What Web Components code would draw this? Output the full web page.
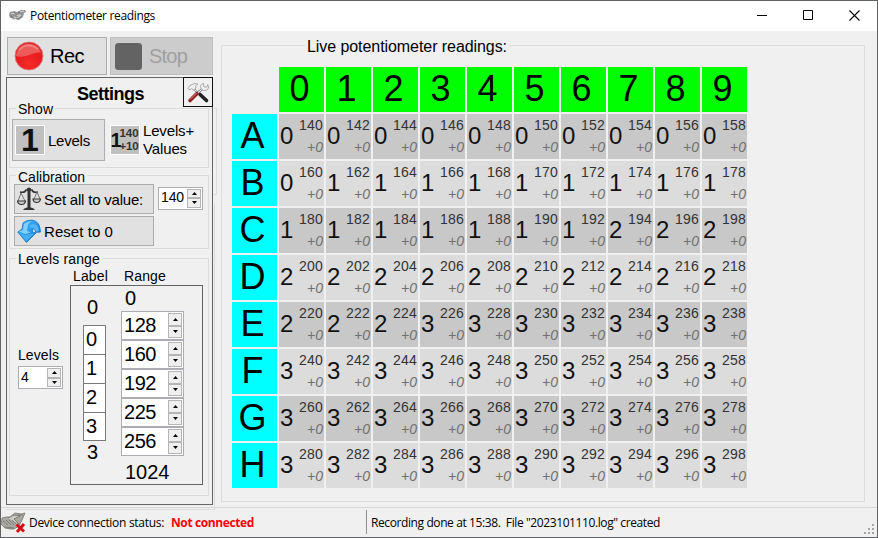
<!DOCTYPE html>
<html lang="en"><head><meta charset="utf-8"><title>Potentiometer readings</title>
<style>html,body{margin:0;height:100%;overflow:hidden}body{font-family:"Liberation Sans",sans-serif;color:#000}</style></head>
<body><app-window></app-window>
<script>
const define = (name, html, setup) => customElements.define(name, class extends HTMLElement {
  connectedCallback() {
    if (this.shadowRoot) return;
    this.attachShadow({mode: 'open'}).innerHTML = typeof html === 'function' ? html(this) : html;
    if (setup) setup(this);
  }
});

/* single line of text, tracked to the width given in "w" */
define('ui-text', '<style>:host{display:block;white-space:pre;width:max-content;flex:none}</style><slot></slot>', el => {
  const w = +el.getAttribute('w');
  if (!w) return;
  const n = el.textContent.length;
  el.style.letterSpacing = (w - el.getBoundingClientRect().width) / n + 'px';
});

const icons = {
  chip: `<svg width="18" height="13" viewBox="0 0 18 13"><path d="M1 3l4-1 3 1 4-2 4 0 1 2-2 1-1 4-4 3-4-1-5-1-1-3z" fill="#959595"/><path d="M2 5l4-1 3 3 4-3M4 8l4 1 4-3M3 10l3 1M11 3l4-1" stroke="#d8d8d8" fill="none"/><path d="M5 3l3 3M9 3l4 2M7 9l3 1M2 7l3 2" stroke="#666" stroke-width=".8" fill="none"/></svg>`,
  rec: `<svg width="30" height="30" viewBox="0 0 30 30"><defs><radialGradient id="g" cx=".5" cy=".8" r=".75"><stop offset="0" stop-color="#f52c28"/><stop offset=".6" stop-color="#e81c20"/><stop offset="1" stop-color="#d9292a"/></radialGradient></defs><circle cx="15" cy="15" r="14" fill="url(#g)" stroke="#e08080" stroke-width=".8"/><path d="M2 15A13 13 0 0 1 27 11Q20 12 15 14Q8 17 2 15z" fill="#ef6a68" opacity=".8"/><path d="M5 9Q14 0 24 8" stroke="#f49a94" stroke-width="2" fill="none" opacity=".6"/></svg>`,
  stop: `<svg width="27" height="27"><rect width="27" height="27" rx="3.5" fill="#636363"/></svg>`,
  tools: `<svg width="24" height="24" viewBox="0 0 24 24" fill="none"><path d="M7.500 8.500l5.500 5.500" stroke="#999" stroke-width="2.200"/><path d="M7.500 8.500l5.500 5.500" stroke="#f0f0f0" stroke-width=".9"/><path d="M14 14.500l6.500 6" stroke="#222" stroke-width="3.600" stroke-linecap="round"/><path d="M2 8.500L4 5.500q4-3 8-1.500l-2.500 2 .5 2-2.500 2-2-1.500-1.500 1.500z" fill="#f0f0f0" stroke="#999" stroke-width=".8"/><path d="M4 20.500l7-7" stroke="#8e2225" stroke-width="3.600" stroke-linecap="round"/><path d="M4 19.500l6.500-6.500" stroke="#d98b87" stroke-width="1"/><path d="M12 12.500l5-4" stroke="#888" stroke-width="2.500"/><path d="M12 12.500l5-4" stroke="#f0f0f0"/><path d="M15 8.500q-1.500-4 2.500-5l.5 3.500 3 0 .7-2.500q2.500 4-1.700 6-3 .7-5-2z" fill="#f0f0f0" stroke="#999" stroke-width=".8"/></svg>`,
  scale: `<svg width="24" height="24" viewBox="0 0 24 24" fill="none" stroke="#333" stroke-width="1.2"><path d="M3 5q5 1 6-2h6q1 3 6 2" stroke-width="1.7"/><path d="M4 6L1 14M4 6l4 8M20 5l-3 7M20 5l3 7" stroke="#666" stroke-width=".9"/><path d="M.5 14H8.500Q8 17.500 4.500 17.500T.5 14zM16 12h7.500q-.5 3.500-3.800 3.500T16 12z" fill="#ccc"/><path d="M12 1v20" stroke-width="3"/><circle cx="12" cy="2.500" r="2" fill="#333" stroke="none"/><path d="M6 23q1-2 4-2.500h4q3 .5 4 2.500z" fill="#333" stroke="none"/></svg>`,
  reset: `<svg width="24" height="24" viewBox="0 0 24 24"><defs><linearGradient id="b" x2="1" y2="1"><stop stop-color="#45b4f8"/><stop offset=".5" stop-color="#2c9bed"/><stop offset="1" stop-color="#0c61bd"/></linearGradient></defs><path d="M5 10L6 4Q9 1 15 1q8 1 8.500 12l-5 .5q0-4-3-3.500l0 3 3.500 1-9.500 9.500L.7 13z" fill="url(#b)" stroke="#1979c9" stroke-width=".8"/><path d="M2 12.500L6 11l1-6q4-3 8-3-4 2-4.500 6l-.5 4 4 1.500-6 1.500z" fill="#7fd0fb"/><path d="M13 6q5-3 8 2l1 4-3 .5q-1-4-6-4z" fill="#56b4f3"/><path d="M2.500 14l5.500 2 9-1.500-7.500 8z" fill="#45aef4"/></svg>`,
  hands: `<svg width="25" height="21" viewBox="0 0 25 21"><path d="M1 6l4-1 4 0 5-4 6 1 4-1-3 7-3 6-5 3-4 0-5-1-4-4z" fill="#a9a9a2" stroke="#75756f" stroke-width=".8"/><path d="M7 6l6-3 6 1-6 3 5 5" fill="#ccccc4" stroke="#66665f" stroke-width=".7"/><path d="M2 9l5 4M5 8l5 5M8 8l5 5M11 8l4 4M17 3l5 0M4 15l9 1" stroke="#70706a" fill="none" stroke-width=".8"/><path d="M15.500 12.500l7.500 7M23 12l-7 8" stroke="#d70b16" stroke-width="3"/></svg>`
};
define('ui-icon', el => `<style>:host{display:block;flex:none}svg{display:block}</style>${icons[el.getAttribute('name')]}`);

define('ui-button', `<style>:host{display:flex;align-items:center;box-sizing:border-box;flex:none;background:#e1e1e1;border:1px solid #adadad}
:host([disabled]){background:#ccc;border-color:#bfbfbf;color:#a0a0a0}:host([flat]){background:none;border-color:transparent}</style><slot></slot>`);

define('ui-group', el => `<style>:host{display:block;box-sizing:border-box;border:1px solid #dcdcdc;flex:none}
.t{display:flex;height:0;margin-left:${el.getAttribute('inset') || 6}px}
ui-text{background:#f0f0f0;height:${el.getAttribute('th') || 16}px;line-height:19px;padding:0 2px;margin-top:${el.getAttribute('lift') || -9}px;font-size:${el.getAttribute('size') || 14}px}</style>
<div class="t"><ui-text w="${+el.getAttribute('tw') + 4}">${el.getAttribute('label')}</ui-text></div><slot></slot>`);

define('ui-spin', el => `<style>:host{display:flex;box-sizing:border-box;background:#fff;border:1px solid #abadb3;flex:none;justify-content:space-between;padding:1px}
.v{align-self:center;padding-left:1px;margin-top:-2px}.b{display:flex;flex-direction:column;width:14px;flex:none}
.b i{flex:1;box-sizing:border-box;border:1px solid #b5b5b5;background:#efefef;display:grid;place-items:center}svg{display:block}</style>
<ui-text class="v" w="${el.getAttribute('tw')}">${el.getAttribute('value')}</ui-text><div class="b"><i><svg width="5" height="3"><path d="M0 3L2.500 0L5 3z"/></svg></i><i><svg width="5" height="3"><path d="M0 0L2.500 3L5 0z"/></svg></i></div>`);

define('level-tile', el => `<style>:host{display:flex;box-sizing:border-box;width:30px;height:30px;background:#c0c0c0;border:1px solid #fff;color:#111;font-weight:bold;align-items:center;justify-content:center;flex:none}
.big{font-size:32px;line-height:28px}.one{font-size:20px;line-height:26px;width:8px;flex:none}.one ui-text{margin-left:-1px}.p{display:flex;flex-direction:column;font-size:11.5px;line-height:13px;color:#333;align-items:flex-end}</style>
${el.hasAttribute('values') ? '<div class="one"><ui-text w="9">1</ui-text></div><div class="p"><ui-text w="19">140</ui-text><ui-text w="19">+10</ui-text></div>' : '<div class="big">1</div>'}`);

define('pot-cell', el => `<style>:host{display:flex;justify-content:space-between;box-sizing:border-box;width:45px;height:45px;background:var(--cell)}
.l{font-size:24px;line-height:43px;margin-left:1px;color:#111}.r{display:flex;flex-direction:column;align-items:flex-end;padding:3px 1px 0 0}
.n{font-size:14px;line-height:17px;color:#333}.d{font-size:14px;line-height:17px;font-style:italic;color:#707070;margin-top:5px}</style>
<ui-text class="l" w="13">${el.getAttribute('level')}</ui-text><div class="r"><ui-text class="n" w="24">${el.getAttribute('value')}</ui-text><ui-text class="d" w="16">+0</ui-text></div>`);

define('pot-head', `<style>:host{display:flex;align-items:center;justify-content:center;width:45px;height:45px;background:#0f0;font-size:36px;line-height:44px;box-sizing:border-box;padding:0 4px 1px 0}:host([row]){background:#0ff}</style><slot></slot>`);

define('pot-grid', () => {
  const levels = ['0000000000','0111111111','1111111222','2222222222','2223333333','3333333333','3333333333','3333333333'];
  let h = '<span></span>' + [...'0123456789'].map(c => `<pot-head>${c}</pot-head>`).join('');
  levels.forEach((row, r) => {
    h += `<pot-head row>${'ABCDEFGH'[r]}</pot-head>`;
    [...row].forEach((l, c) => h += `<pot-cell style="--cell:${r % 2 ? '#dcdcdc' : '#c8c8c8'}" level="${l}" value="${140 + r * 20 + c * 2}"></pot-cell>`);
  });
  return `<style>:host{display:grid;grid-template-columns:repeat(11,45px);grid-auto-rows:45px;gap:2px}</style>${h}`;
});

define('levels-table', `<style>:host{display:flex;box-sizing:border-box;width:133px;height:200px;border:1px solid #646464;font-size:20px;line-height:22px}
.a{width:23px;margin-left:12px;padding-top:10px}.a>ui-text{margin-left:4px}.box{border:1px solid #7a7a7a;margin-top:7px;background:#fff}
.box div{height:28px;line-height:27px;padding-left:2px;border-bottom:1px solid #7a7a7a}.box div:last-child{border:0;height:27px}.box+ui-text{margin-top:0}
.b{margin-left:15px;padding-top:1px}.b>ui-text{margin-left:4px}.b ui-spin{width:63px;height:29px}.b ui-spin:first-of-type{margin-top:2px}.b ui-text:last-child{margin-top:5px}</style>
<div class="a"><ui-text>0</ui-text><div class="box"><div>0</div><div>1</div><div>2</div><div>3</div></div><ui-text>3</ui-text></div>
<div class="b"><ui-text>0</ui-text><ui-spin value="128" tw="33"></ui-spin><ui-spin value="160" tw="33"></ui-spin><ui-spin value="192" tw="33"></ui-spin><ui-spin value="225" tw="33"></ui-spin><ui-spin value="256" tw="33"></ui-spin><ui-text>1024</ui-text></div>`);

define('settings-panel', `<style>:host{display:block;box-sizing:border-box;width:207px;height:428px;border:1px solid #646464;position:relative;background:#f0f0f0;font-size:15px}
.head{display:flex;justify-content:flex-end;height:30px}.head ui-text{font-weight:bold;font-size:18px;line-height:33px;margin-right:68px}
.tool{position:absolute;right:-1px;top:-1px;box-sizing:border-box;width:30px;height:30px;border:1px solid #111;display:grid;place-items:center;background:#f0f0f0}
ui-group{width:200px;margin-left:2px}.show{height:60px}.cal{height:74px;margin-top:7px}.lev{height:238px;margin-top:9px}
.row{display:flex;align-items:center}.show .row{padding:10px 0 0 2px}.show ui-button{height:42px;width:93px;padding-left:2px;gap:3px}
.show .two{width:100px;margin-left:2px;gap:4px}.two div{line-height:18px;margin-left:-1px}
.cal{line-height:20px}.cal ui-button{width:140px;height:30px;padding-left:2px;gap:3px}.cal .row{padding:8px 0 0 4px}.cal .row+ui-button{margin:2px 0 0 4px}.cal ui-button ui-text{padding-top:2px}.cal ui-spin{width:45px;height:23px;margin-left:4px;margin-top:-2px;font-size:14px}
.lv{display:flex}.side{width:52px;padding:88px 0 0 8px;font-size:14px}.side ui-spin{width:45px;height:23px;margin-top:3px}
.labs{display:flex;font-size:14px;line-height:16px;padding:9px 0 1px 3px;gap:16px}</style>
<div class="head"><ui-text w="67">Settings</ui-text></div><div class="tool"><ui-icon name="tools"></ui-icon></div>
<ui-group class="show" label="Show" tw="35"><div class="row"><ui-button><level-tile></level-tile><ui-text w="42">Levels</ui-text></ui-button><ui-button flat class="two"><level-tile values></level-tile><div><ui-text w="51">Levels+</ui-text><ui-text w="44">Values</ui-text></div></ui-button></div></ui-group>
<ui-group class="cal" label="Calibration" tw="67" lift="-8"><div class="row"><ui-button><ui-icon name="scale"></ui-icon><ui-text w="99">Set all to value:</ui-text></ui-button><ui-spin value="140" tw="24"></ui-spin></div><ui-button><ui-icon name="reset"></ui-icon><ui-text w="69">Reset to 0</ui-text></ui-button></ui-group>
<ui-group class="lev" label="Levels range" tw="82"><div class="lv"><div class="side"><ui-text w="41">Levels</ui-text><ui-spin value="4" tw="8"></ui-spin></div><div><div class="labs"><ui-text w="35">Label</ui-text><ui-text w="42">Range</ui-text></div><levels-table></levels-table></div></div></ui-group>`);

define('app-window', `<style>:host{display:grid;grid-template-rows:30px 476px 30px;box-sizing:border-box;width:878px;height:538px;border:1px solid #606266;background:#f0f0f0;position:relative;overflow:hidden}
.bar{display:flex;align-items:center;background:#fff;padding-left:8px;font:12px "Open Sans",sans-serif}.bar ui-icon{margin-top:-2px}.bar ui-text{margin:-1px 0 0 3px}.win{margin-left:auto;display:flex;gap:35px;padding-right:17px;margin-top:-1px}.win svg{display:block}
.main{display:flex}.left{padding:6px 0 0 6px;width:214px;box-sizing:border-box;flex:none}.top{display:flex;gap:3px;margin-bottom:2px;font-size:20px}.top ui-button{height:38px}
.rec{width:100px;padding-left:6px;gap:6px}.stop{width:103px;padding-left:4px;gap:7px}settings-panel{margin-left:-1px}
.live{width:644px;height:457px;margin:14px 0 0 6px}pot-grid{margin:21px 0 0 10px}
.status{display:flex;border-top:1px solid #d7d7d7;box-sizing:border-box;font:12px/29px "Open Sans",sans-serif}.status .s1{display:flex;width:365px;align-items:center}.s1 ui-text{margin-left:3px}.s1 b{color:red;margin-left:4px}.sep{width:1px;height:24px;margin:2px 4px 0 0;background:#909090}
.edge{position:absolute;border:1px solid #dcdcdc;border-left:0;box-sizing:border-box}.e1{left:212px;top:107px;width:4px;height:87px}.e2{left:5px;top:203px;width:209px;height:306px;border-top-color:transparent}.grip{position:absolute;right:2px;bottom:2px}
settings-panel,.s1 *{position:relative}</style>
<div class="edge e1"></div><div class="edge e2"></div>
<div class="bar"><ui-icon name="chip"></ui-icon><ui-text w="125">Potentiometer readings</ui-text><div class="win"><svg width="11" height="11"><path d="M0 5.500h10" stroke="#000"/></svg><svg width="11" height="11"><path d="M.5.5h9v9h-9z" fill="none" stroke="#000"/></svg><svg width="11" height="11"><path d="M.5.5l10 10M10.500.5l-10 10" stroke="#000" stroke-width="1.100"/></svg></div></div>
<div class="main"><div class="left"><div class="top"><ui-button class="rec"><ui-icon name="rec"></ui-icon><ui-text w="34">Rec</ui-text></ui-button><ui-button class="stop" disabled><ui-icon name="stop"></ui-icon><ui-text w="38">Stop</ui-text></ui-button></div><settings-panel></settings-panel></div>
<ui-group class="live" label="Live potentiometer readings:" tw="200" size="16" inset="83" lift="-9" th="19"><pot-grid></pot-grid></ui-group></div>
<div class="status"><div class="s1"><ui-icon name="hands"></ui-icon><ui-text w="135">Device connection status:</ui-text><b><ui-text w="83">Not connected</ui-text></b></div><div class="sep"></div><ui-text w="289">Recording done at 15:38.  File "2023101110.log" created</ui-text></div>
<svg class="grip" width="11" height="11" fill="#a5a5a5"><path d="M8 0h2v2h-2zM4 4h2v2h-2zM8 4h2v2h-2zM0 8h2v2h-2zM4 8h2v2h-2zM8 8h2v2h-2z"/></svg>`);
</script></body></html>
